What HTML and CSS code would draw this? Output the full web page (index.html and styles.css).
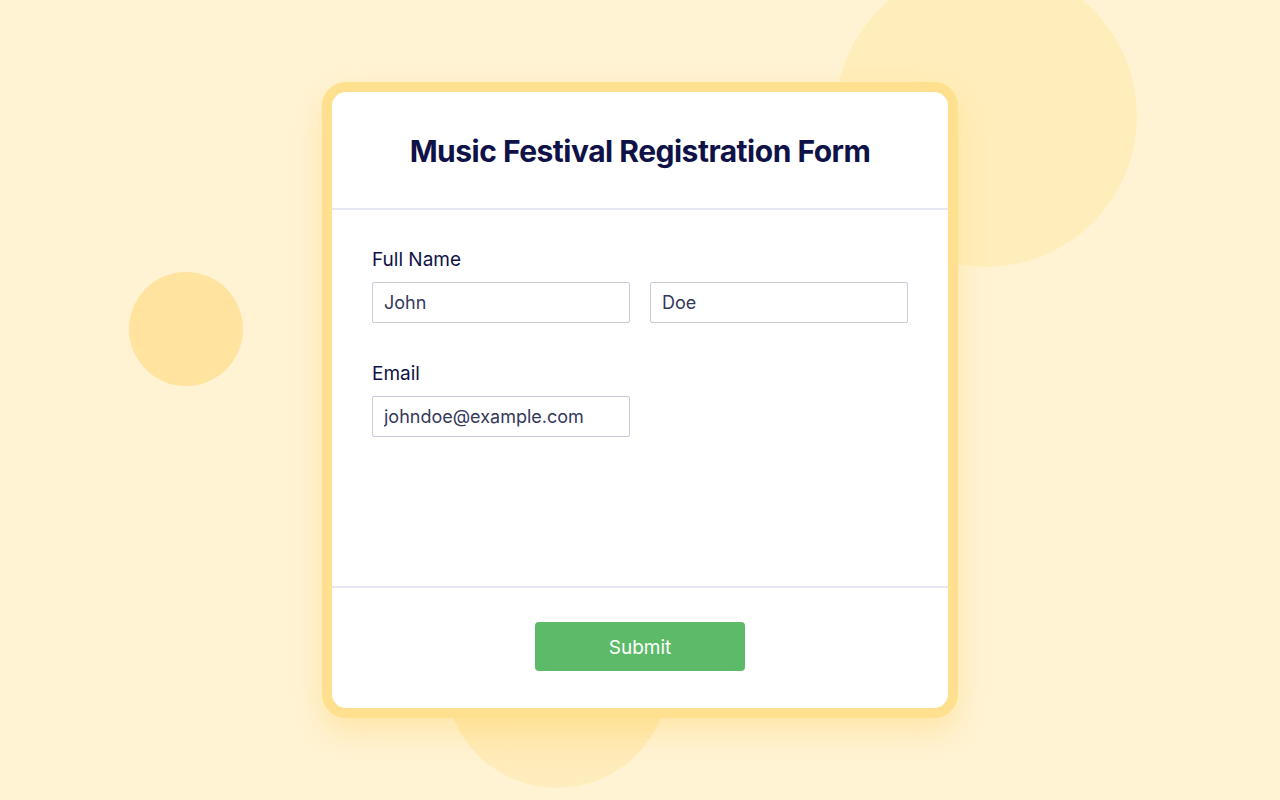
FILE: index.html
```html
<!DOCTYPE html>
<html lang="en">
<head>
    <meta charset="UTF-8">
    <meta name="viewport" content="width=device-width, initial-scale=1.0">
    <title>Music Festival Registration Form</title>
    <link rel="stylesheet" href="styles.css">
</head>
<body>

<div class="scene">
    <div class="blob blob-left"></div>
    <div class="blob blob-right"></div>
    <div class="blob blob-bottom"></div>

    <div class="frame">
        <form class="card">
            <div class="card-header">
                <h1>Music Festival Registration Form</h1>
            </div>

            <div class="card-body">
                <div class="field">
                    <label for="firstName">Full Name</label>
                    <div class="row">
                        <input type="text" id="firstName" value="John">
                        <input type="text" id="lastName" value="Doe">
                    </div>
                </div>

                <div class="field">
                    <label for="email">Email</label>
                    <div class="row">
                        <input type="email" id="email" value="johndoe@example.com">
                    </div>
                </div>
            </div>

            <div class="card-footer">
                <button type="button">Submit</button>
            </div>
        </form>
    </div>
</div>

</body>
</html>
```

FILE: styles.css
```css
* {
    box-sizing: border-box;
}
body {
    margin: 0;
    font-family: "Inter", "Open Sans", sans-serif;
    background-color: #fff3d4;
}
.scene {
    position: relative;
    width: 1280px;
    height: 800px;
    overflow: hidden;
    display: flex;
    justify-content: center;
    align-items: center;
}
.blob {
    position: absolute;
    border-radius: 50%;
}
.blob-left {
    left: 129px;
    top: 272px;
    width: 114px;
    height: 114px;
    background-color: #ffe39e;
}
.blob-right {
    left: 835px;
    top: -35px;
    width: 302px;
    height: 302px;
    background-color: #ffeebb;
}
.blob-bottom {
    left: 445px;
    top: 564px;
    width: 224px;
    height: 224px;
    background: linear-gradient(#ffe295, #ffedbf);
}
.frame {
    position: relative;
    padding: 10px;
    border-radius: 24px;
    background-color: #ffe08e;
    box-shadow: 0 14px 30px rgba(255, 205, 90, 0.35);
}
.card {
    width: 616px;
    height: 616px;
    background-color: #fff;
    border-radius: 14px;
    display: flex;
    flex-direction: column;
    overflow: hidden;
}
.card-header {
    height: 118px;
    border-bottom: 2px solid #e4e6f1;
    display: flex;
    align-items: center;
    justify-content: center;
    padding-top: 2px;
}
h1 {
    margin: 0;
    font-size: 30px;
    font-weight: 700;
    color: #0f1247;
    letter-spacing: -0.5px;
}
.card-body {
    flex: 1;
    padding: 38px 40px 0;
    border-bottom: 2px solid #e4e6f1;
}
.field {
    margin-bottom: 39px;
}
label {
    display: block;
    font-size: 19px;
    color: #0f1247;
    margin-bottom: 11px;
}
.row {
    display: flex;
    gap: 20px;
}
input {
    width: 258px;
    height: 41px;
    padding: 0 11px;
    border: 1px solid #c8cbd9;
    border-radius: 2px;
    font-family: inherit;
    font-size: 18px;
    color: #34385a;
}
.card-footer {
    height: 120px;
    display: flex;
    justify-content: center;
    padding-top: 34px;
}
button {
    width: 210px;
    height: 49px;
    background-color: #5cba68;
    color: #fff;
    border: none;
    border-radius: 4px;
    font-family: inherit;
    font-size: 19px;
    padding-top: 3px;
}
```
